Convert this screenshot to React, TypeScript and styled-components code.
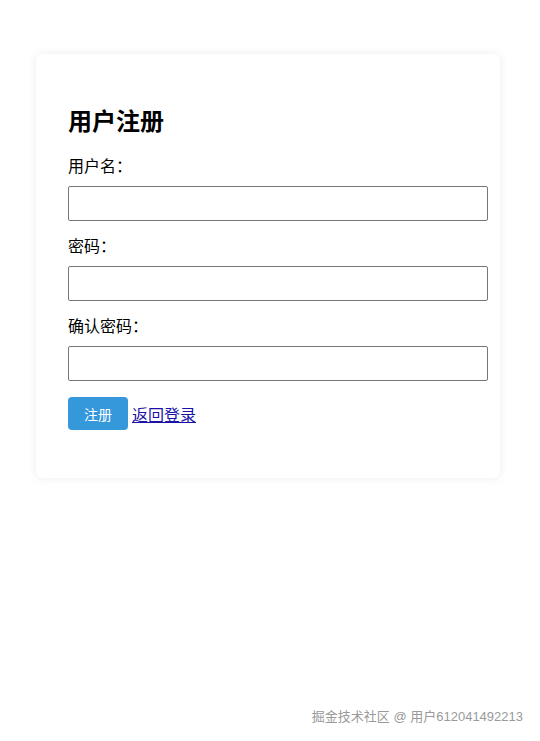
import React from 'react';
import styled, { createGlobalStyle } from 'styled-components';

const GlobalStyle = createGlobalStyle`
  html, body {
    margin: 0;
    padding: 0;
    background: #fff;
  }
  body {
    font-family: "Liberation Sans", "Noto Sans CJK SC", sans-serif;
    color: #000;
  }
`;

const Page = styled.div`
  position: relative;
  width: 540px;
  height: 741px;
  padding: 54px 0 0 36px;
  box-sizing: border-box;
`;

const Card = styled.div`
  width: 464px;
  box-sizing: border-box;
  padding: 32px 32px 48px;
  background: #fff;
  border-radius: 6px;
  box-shadow: 0 0 10px rgba(0, 0, 0, 0.08);
`;

const Title = styled.h2`
  margin: 20px 0 18px;
  font-size: 24px;
  line-height: 32px;
  font-weight: 700;
`;

const Field = styled.div`
  margin-bottom: 15px;
`;

const Label = styled.label`
  display: block;
  font-size: 16px;
  line-height: 22px;
  margin-bottom: 8px;
`;

const Input = styled.input`
  display: block;
  width: 100%;
  height: 33px;
  padding: 0 9px;
  border: 1px solid #767676;
  border-radius: 2px;
  font-size: 16px;
  font-family: inherit;
  box-sizing: content-box;
  outline: none;
`;

const Actions = styled.div`
  display: flex;
  align-items: center;
  margin-top: 16px;
`;

const Button = styled.button`
  height: 33px;
  padding: 0 16px;
  border: none;
  border-radius: 4px;
  background: #3498db;
  color: #fff;
  font-size: 14px;
  font-family: inherit;
  cursor: pointer;
`;

const Link = styled.a`
  margin-left: 4px;
  font-size: 16px;
  color: #1b12a6;
  text-decoration: underline;
`;

const Watermark = styled.div`
  position: absolute;
  right: 17px;
  bottom: 16px;
  font-size: 13px;
  color: #9a9a9a;
`;

export default function App() {
  const fields = [
    { id: 'username', label: '用户名：', type: 'text' },
    { id: 'password', label: '密码：', type: 'password' },
    { id: 'confirm', label: '确认密码：', type: 'password' },
  ];
  return (
    <>
      <GlobalStyle />
      <Page>
        <Card>
          <Title>用户注册</Title>
          {fields.map((f) => (
            <Field key={f.id}>
              <Label htmlFor={f.id}>{f.label}</Label>
              <Input id={f.id} type={f.type} />
            </Field>
          ))}
          <Actions>
            <Button>注册</Button>
            <Link href="#">返回登录</Link>
          </Actions>
        </Card>
        <Watermark>掘金技术社区 @ 用户612041492213</Watermark>
      </Page>
    </>
  );
}
